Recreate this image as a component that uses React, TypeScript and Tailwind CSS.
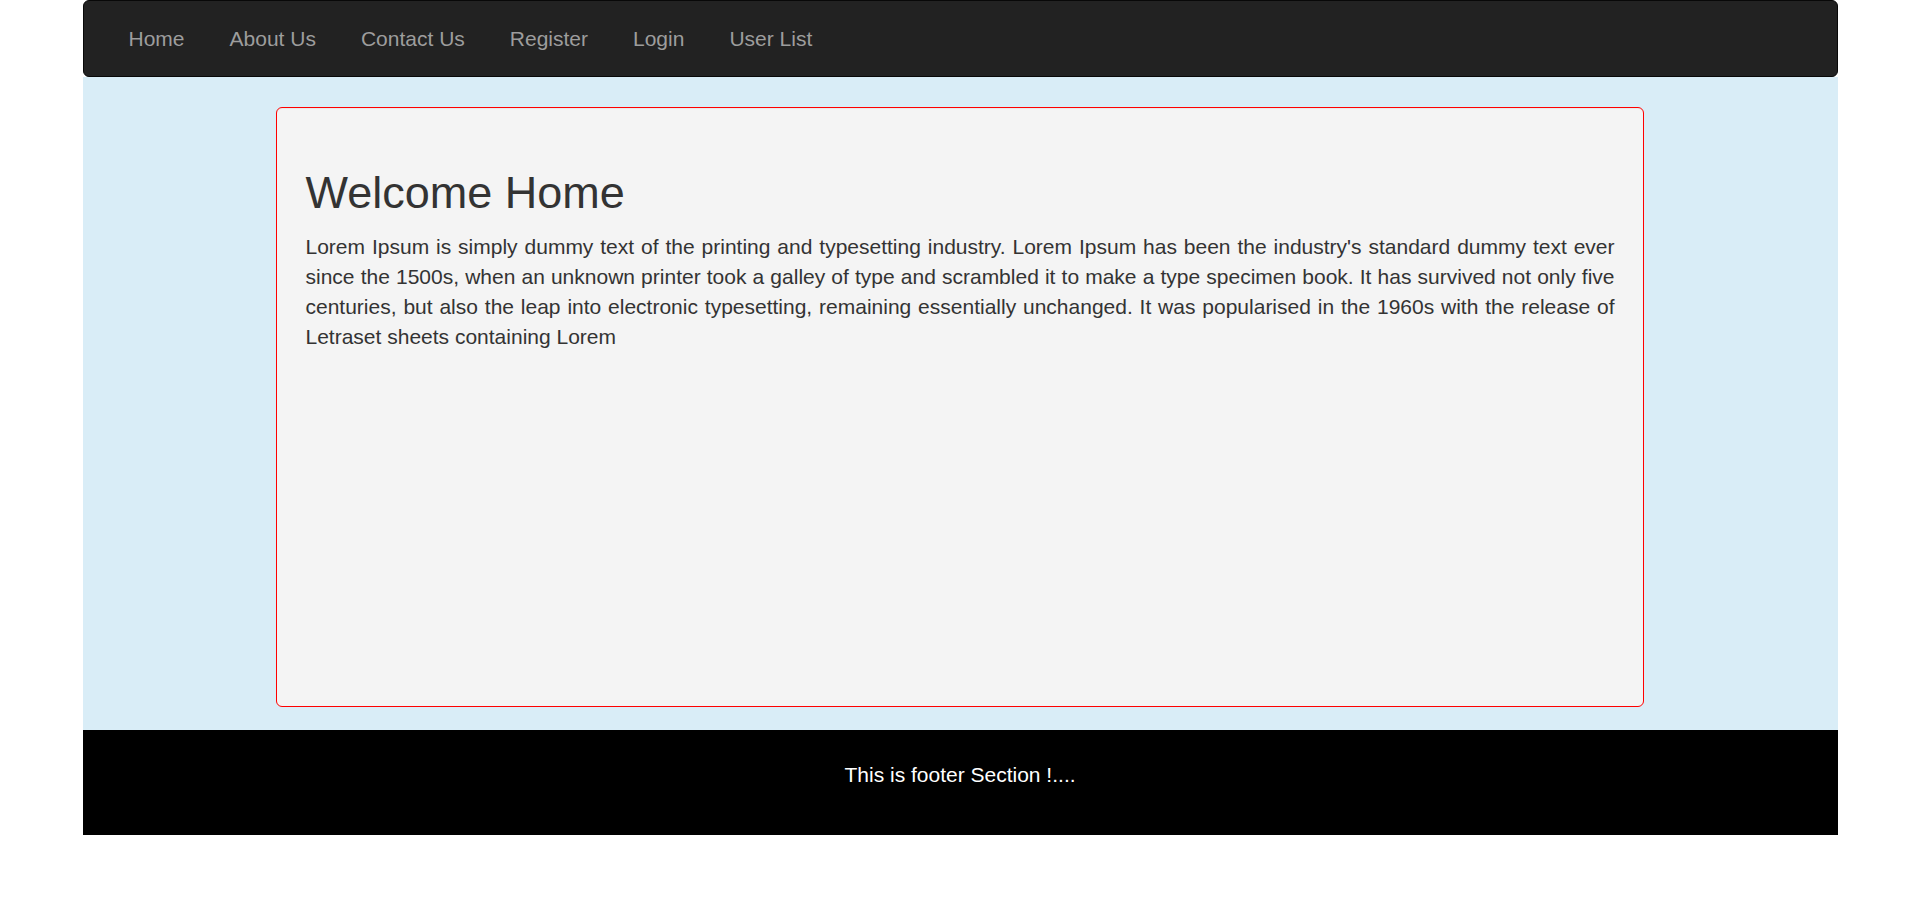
import React from 'react';

const navLinks = ['Home', 'About Us', 'Contact Us', 'Register', 'Login', 'User List'];

const lorem =
    "Lorem Ipsum is simply dummy text of the printing and typesetting industry. Lorem Ipsum has been the industry's standard dummy text ever since the 1500s, when an unknown printer took a galley of type and scrambled it to make a type specimen book. It has survived not only five centuries, but also the leap into electronic typesetting, remaining essentially unchanged. It was popularised in the 1960s with the release of Letraset sheets containing Lorem";

const App: React.FC = () => {
    return (
        <div className="min-h-[924px] bg-white text-[#333] text-[21px] leading-[30px] font-['Liberation_Sans',Arial,sans-serif]">
            <div className="w-[1755px] mx-auto">
                {/* Navbar */}
                <nav className="h-[77px] bg-[#222] border border-[#080808] rounded-[6px] px-[22.5px]">
                    <ul className="flex">
                        {navLinks.map(link => (
                            <li key={link}>
                                <a href="#" className="block px-[22.5px] pt-[22.5px] pb-[22.5px] text-[#9d9d9d] hover:text-white">
                                    {link}
                                </a>
                            </li>
                        ))}
                    </ul>
                </nav>

                {/* Main */}
                <main className="bg-[#d9edf7] pt-[30px] pb-[23px]">
                    <div className="w-[1368px] h-[600px] mx-auto bg-[#f4f4f4] border border-[#ff0000] rounded-[6px] px-[28.5px] pt-[29.5px] pb-[28.5px] shadow-[inset_0_1px_1px_rgba(0,0,0,0.05)]">
                        <h2 className="mt-[30px] mb-[15px] text-[45px] leading-[49.5px] font-normal">Welcome Home</h2>
                        <p className="text-justify">{lorem}</p>
                    </div>
                </main>

                {/* Footer */}
                <footer className="bg-black text-white text-center pt-[30px] pb-[30px]">
                    <p className="mb-[15px]">This is footer Section !....</p>
                </footer>
            </div>
        </div>
    );
};

export default App;
